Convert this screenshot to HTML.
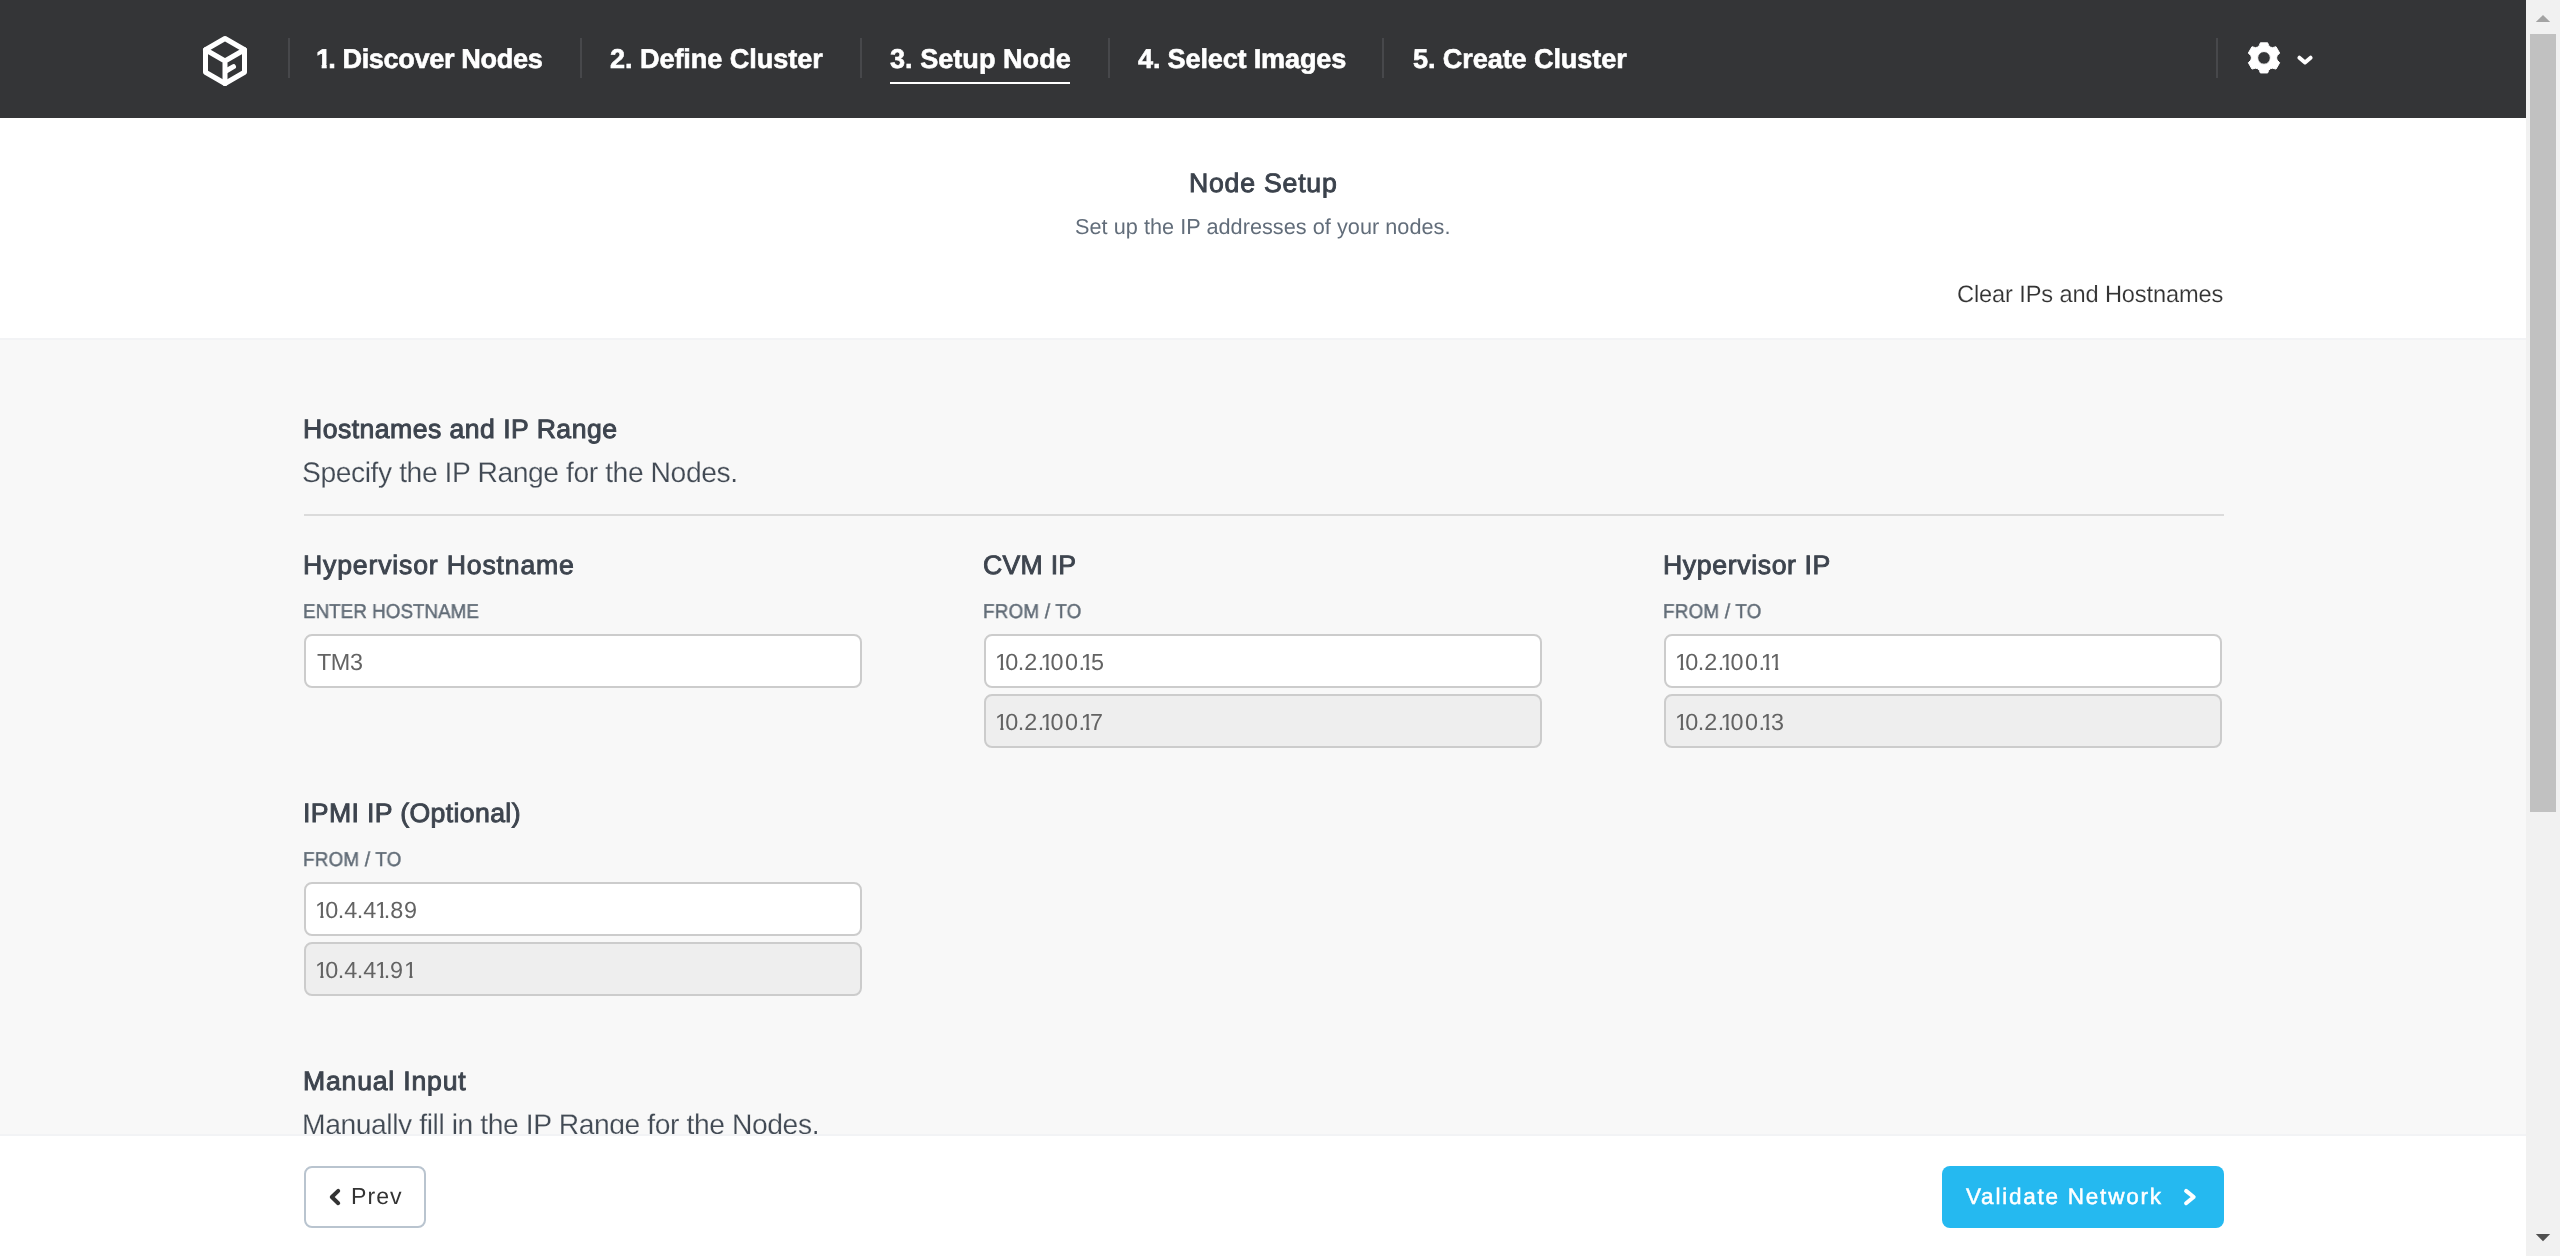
<!DOCTYPE html>
<html lang="en">
<head>
<meta charset="utf-8">
<title>Node Setup</title>
<style>
*{box-sizing:border-box;margin:0;padding:0}
html,body{width:2560px;height:1256px;overflow:hidden;background:#f8f8f8;font-family:"Liberation Sans",sans-serif}
.t{position:absolute;white-space:nowrap;line-height:1;will-change:transform;text-rendering:geometricPrecision}
/* header */
#hdr{position:absolute;left:0;top:0;width:2526px;height:118px;background:#343537}
.sep{position:absolute;top:38px;width:2px;height:40px;background:#47484b}
.nav{color:#fff;font-weight:bold;-webkit-text-stroke:0.6px #fff}
#ul{position:absolute;left:890px;top:82px;width:180px;height:2px;background:#fff}
/* white title section */
#top{position:absolute;left:0;top:118px;width:2526px;height:220px;background:#fff}
#topb{position:absolute;left:0;top:338px;width:2526px;height:2px;background:#f2f3f5}
.h1{color:#3b424c;-webkit-text-stroke:0.9px #3b424c}
.sub{color:#626d7a}
.lnk{color:#333;-webkit-text-stroke:0.15px #fff}
.h2{color:#3d444e;-webkit-text-stroke:0.95px #3d444e}
.p{color:#424a54;-webkit-text-stroke:0.2px #f8f8f8}
.h3{color:#3d444e;-webkit-text-stroke:0.9px #3d444e}
.lbl{color:#606b76;-webkit-text-stroke:0.45px #606b76;transform:scaleX(0.94);transform-origin:0 0}
.val{color:#636363}
.one{display:inline-block;clip-path:polygon(-5px -5px,20px -5px,20px 17px,8.55px 17px,8.55px 30px,5.3px 30px,5.3px 17px,-5px 17px)}
.btn{color:#333}
.btnp{color:#fff;-webkit-text-stroke:0.5px #fff}
.hr{position:absolute;left:304px;top:514px;width:1920px;height:2px;background:#dbdbdb}
.inp{position:absolute;width:558px;height:54px;border:2px solid #cccccc;border-radius:8px;background:#fff}
.inp.dis{background:#eee}
/* footer */
#ftb{position:absolute;left:0;top:1134px;width:2526px;height:2px;background:#f2f3f5}
#ft{position:absolute;left:0;top:1136px;width:2526px;height:120px;background:#fff}
#prev{position:absolute;left:304px;top:1166px;width:122px;height:62px;border:2px solid #b9c4cf;border-radius:8px;background:#fff}
#next{position:absolute;left:1942px;top:1166px;width:282px;height:62px;border-radius:8px;background:#25b9f0}
/* scrollbar */
#sb{position:absolute;left:2526px;top:0;width:34px;height:1256px;background:#f1f1f1}
#th{position:absolute;left:2530px;top:34px;width:26px;height:778px;background:#c1c1c1}
svg{position:absolute;overflow:visible}
</style>
</head>
<body>
<!-- main gray content -->
<div class="t h2" style="left:303.19px;top:416px;font-size:26.6px;letter-spacing:0.471px;">Hostnames and IP Range</div>
<div class="t p" style="left:302.44px;top:458px;font-size:28.27px;letter-spacing:-0.423px;">Specify the IP Range for the Nodes.</div>
<div class="hr"></div>

<div class="t h3" style="left:303.16px;top:552px;font-size:26.67px;letter-spacing:0.814px;">Hypervisor Hostname</div>
<div class="t lbl" style="left:302.98px;top:602px;font-size:19.99px;letter-spacing:0.046px;">ENTER HOSTNAME</div>
<div class="inp" style="left:304px;top:634px"></div>
<div class="t val" style="left:317.26px;top:651px;font-size:23.4px;letter-spacing:-0.413px;">TM3</div>

<div class="t h3" style="left:983.07px;top:552px;font-size:26.67px;letter-spacing:0.263px;">CVM IP</div>
<div class="t lbl" style="left:983.08px;top:602px;font-size:19.99px;letter-spacing:0.257px;">FROM / TO</div>
<div class="inp" style="left:984px;top:634px"></div>
<div class="t val" style="left:995.35px;top:651px;font-size:23.4px;"><span class="one" style="letter-spacing:-2.82px">1</span><span style="letter-spacing:-0.37px">0</span><span style="letter-spacing:-0.08px">.</span><span style="letter-spacing:0.41px">2</span><span style="letter-spacing:-3.69px">.</span><span class="one" style="letter-spacing:-3.12px">1</span><span style="letter-spacing:1.68px">0</span><span style="letter-spacing:0.28px">0</span><span style="letter-spacing:-4.09px">.</span><span class="one" style="letter-spacing:-2.87px">1</span>5</div>
<div class="inp dis" style="left:984px;top:694px"></div>
<div class="t val" style="left:995.35px;top:711px;font-size:23.4px;"><span class="one" style="letter-spacing:-2.82px">1</span><span style="letter-spacing:-0.37px">0</span><span style="letter-spacing:-0.08px">.</span><span style="letter-spacing:0.41px">2</span><span style="letter-spacing:-3.69px">.</span><span class="one" style="letter-spacing:-3.12px">1</span><span style="letter-spacing:1.68px">0</span><span style="letter-spacing:0.28px">0</span><span style="letter-spacing:-4.09px">.</span><span class="one" style="letter-spacing:-3.79px">1</span>7</div>

<div class="t h3" style="left:1663.16px;top:552px;font-size:26.67px;letter-spacing:0.618px;">Hypervisor IP</div>
<div class="t lbl" style="left:1663.08px;top:602px;font-size:19.99px;letter-spacing:0.257px;">FROM / TO</div>
<div class="inp" style="left:1664px;top:634px"></div>
<div class="t val" style="left:1675.35px;top:651px;font-size:23.4px;"><span class="one" style="letter-spacing:-2.82px">1</span><span style="letter-spacing:-0.37px">0</span><span style="letter-spacing:-0.08px">.</span><span style="letter-spacing:0.41px">2</span><span style="letter-spacing:-3.69px">.</span><span class="one" style="letter-spacing:-3.12px">1</span><span style="letter-spacing:1.68px">0</span><span style="letter-spacing:0.28px">0</span><span style="letter-spacing:-4.09px">.</span><span class="one" style="letter-spacing:-4.12px">1</span><span class="one">1</span></div>
<div class="inp dis" style="left:1664px;top:694px"></div>
<div class="t val" style="left:1675.35px;top:711px;font-size:23.4px;"><span class="one" style="letter-spacing:-2.82px">1</span><span style="letter-spacing:-0.37px">0</span><span style="letter-spacing:-0.08px">.</span><span style="letter-spacing:0.41px">2</span><span style="letter-spacing:-3.69px">.</span><span class="one" style="letter-spacing:-3.12px">1</span><span style="letter-spacing:1.68px">0</span><span style="letter-spacing:0.28px">0</span><span style="letter-spacing:-4.09px">.</span><span class="one" style="letter-spacing:-2.79px">1</span>3</div>

<div class="t h3" style="left:302.87px;top:800px;font-size:26.67px;letter-spacing:0.364px;">IPMI IP (Optional)</div>
<div class="t lbl" style="left:303.08px;top:850px;font-size:19.99px;letter-spacing:0.257px;">FROM / TO</div>
<div class="inp" style="left:304px;top:882px"></div>
<div class="t val" style="left:315.35px;top:899px;font-size:23.4px;"><span class="one" style="letter-spacing:-2.82px">1</span><span style="letter-spacing:-0.37px">0</span><span style="letter-spacing:-0.22px">.</span><span style="letter-spacing:-0.39px">4</span><span style="letter-spacing:-0.02px">.</span><span style="letter-spacing:-1.33px">4</span><span class="one" style="letter-spacing:-4.23px">1</span><span style="letter-spacing:0.13px">.</span><span style="letter-spacing:0.63px">8</span>9</div>
<div class="inp dis" style="left:304px;top:942px"></div>
<div class="t val" style="left:315.35px;top:959px;font-size:23.4px;"><span class="one" style="letter-spacing:-2.82px">1</span><span style="letter-spacing:-0.37px">0</span><span style="letter-spacing:-0.22px">.</span><span style="letter-spacing:-0.39px">4</span><span style="letter-spacing:-0.02px">.</span><span style="letter-spacing:-1.33px">4</span><span class="one" style="letter-spacing:-4.23px">1</span><span style="letter-spacing:-0.23px">.</span><span style="letter-spacing:1.03px">9</span><span class="one">1</span></div>

<div class="t h2" style="left:303.19px;top:1068px;font-size:26.6px;letter-spacing:0.807px;">Manual Input</div>
<div class="t p" style="left:302.4px;top:1110px;font-size:28.27px;letter-spacing:-0.413px;">Manually fill in the IP Range for the Nodes.</div>

<!-- white title section -->
<div id="top"></div><div id="topb"></div>
<div class="t h1" style="left:1189.16px;top:170px;font-size:26.67px;letter-spacing:0.77px;">Node Setup</div>
<div class="t sub" style="left:1075.49px;top:216px;font-size:21.66px;letter-spacing:0.04px;">Set up the IP addresses of your nodes.</div>
<div class="t lnk" style="left:1956.58px;top:284px;font-size:23.62px;letter-spacing:-0.123px;">Clear IPs and Hostnames</div>

<!-- header -->
<div id="hdr"></div>
<svg style="left:195px;top:30px" width="60" height="62" viewBox="195 30 60 62">
  <g fill="none" stroke="#fff" stroke-width="5" stroke-linejoin="round" stroke-linecap="round">
    <path d="M225 38.5 L244.5 49.75 L244.5 72.25 L225 83.5 L205.5 72.25 L205.5 49.75 Z"/>
    <path d="M205.5 49.75 L225 61 L244.5 49.75 M225 61 L225 83.5"/>
    <path d="M226 71 L233.5 66.7"/>
  </g>
</svg>
<div class="sep" style="left:288px"></div>
<div class="t nav" style="left:316.03px;top:45px;font-size:27.11px;letter-spacing:-0.356px;"><span style="display:inline-block;clip-path:polygon(-5px -5px,25px -5px,25px 19px,10.7px 19px,10.7px 35px,5.68px 35px,5.68px 19px,-5px 19px);letter-spacing:-2.96px">1</span>. Discover Nodes</div>
<div class="sep" style="left:580px"></div>
<div class="t nav" style="left:609.5px;top:45px;font-size:27.11px;letter-spacing:-0.078px;">2. Define Cluster</div>
<div class="sep" style="left:860px"></div>
<div class="t nav" style="left:889.52px;top:45px;font-size:27.11px;letter-spacing:0.004px;">3. Setup Node</div>
<div id="ul"></div>
<div class="sep" style="left:1108px"></div>
<div class="t nav" style="left:1137.72px;top:45px;font-size:27.11px;letter-spacing:-0.182px;">4. Select Images</div>
<div class="sep" style="left:1382px"></div>
<div class="t nav" style="left:1412.95px;top:45px;font-size:27.11px;letter-spacing:-0.11px;">5. Create Cluster</div>
<div class="sep" style="left:2216px"></div>
<!-- gear + caret -->
<svg style="left:2240px;top:36px" width="80" height="46" viewBox="2240 36 80 46">
  <g id="gear" transform="translate(2264 57.9)">
    <path id="gearp" fill="#fff" fill-rule="evenodd" stroke="#fff" stroke-width="1" stroke-linejoin="round" d="M4.65 -12.46 L3.65 -15.06 L-3.65 -15.06 L-4.65 -12.46 Q-6.00 -10.39 -8.47 -10.26 L-12.02 -11.16 L-15.67 -4.83 L-13.12 -2.20 Q-12.00 -0.00 -13.12 2.20 L-15.67 4.83 L-12.02 11.16 L-8.47 10.26 Q-6.00 10.39 -4.65 12.46 L-3.65 15.06 L3.65 15.06 L4.65 12.46 Q6.00 10.39 8.47 10.26 L12.02 11.16 L15.67 4.83 L13.12 2.20 Q12.00 0.00 13.12 -2.20 L15.67 -4.83 L12.02 -11.16 L8.47 -10.26 Q6.00 -10.39 4.65 -12.46 Z M6.35 0 A6.35 6.35 0 1 0 -6.35 0 A6.35 6.35 0 1 0 6.35 0 Z"/>
  </g>
  <path d="M2299.4 57.7 L2305 62.5 L2310.6 57.7" fill="none" stroke="#fff" stroke-width="4" stroke-linecap="round" stroke-linejoin="round"/>
</svg>

<!-- footer -->
<div id="ftb"></div><div id="ft"></div>
<div id="prev"></div>
<svg style="left:326px;top:1185px" width="20" height="24" viewBox="326 1185 20 24">
  <path d="M338.2 1190.9 L331.8 1197.05 L338.2 1203.2" fill="none" stroke="#333" stroke-width="4" stroke-linecap="round" stroke-linejoin="round"/>
</svg>
<div class="t btn" style="left:351.01px;top:1185px;font-size:23.11px;letter-spacing:1.034px;">Prev</div>
<div id="next"></div>
<div class="t btnp" style="left:1966.09px;top:1186px;font-size:22.53px;letter-spacing:1.763px;">Validate Network</div>
<svg style="left:2180px;top:1185px" width="20" height="24" viewBox="2180 1185 20 24">
  <path d="M2186.1 1190.9 L2193.7 1197.05 L2186.1 1203.25" fill="none" stroke="#fff" stroke-width="4" stroke-linecap="round" stroke-linejoin="round"/>
</svg>

<!-- scrollbar -->
<div id="sb"></div><div id="th"></div>
<svg style="left:2526px;top:0" width="34" height="1256" viewBox="2526 0 34 1256">
  <path d="M2543 15 L2550.2 22 L2535.8 22 Z" fill="#a3a3a3"/>
  <path d="M2543 1241.2 L2550.2 1234 L2535.8 1234 Z" fill="#505050"/>
</svg>
<script>(function(){var w=window.innerWidth;if(w&&Math.abs(w-2560)>1){document.documentElement.style.zoom=w/2560;}})();</script>
</body>
</html>
